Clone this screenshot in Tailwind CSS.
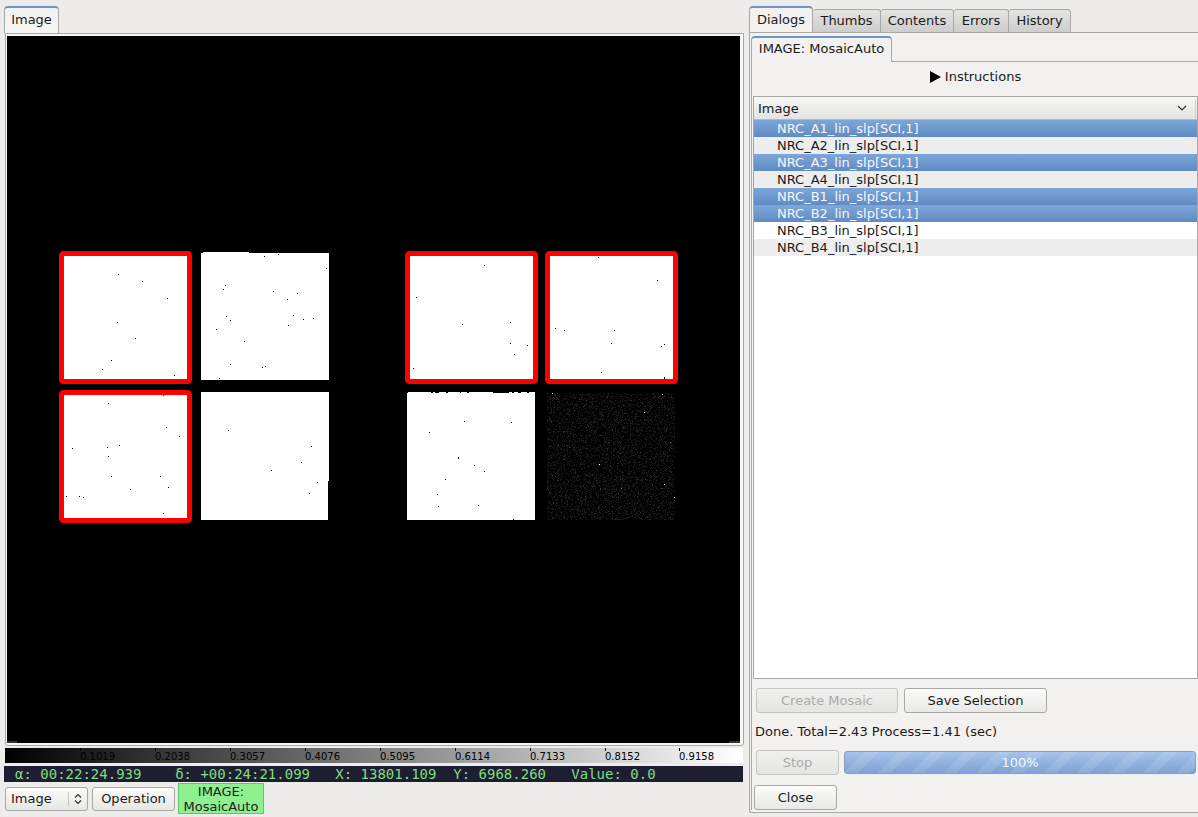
<!DOCTYPE html>
<html lang="en">
<head>
    <meta charset="UTF-8">
    <title>Ginga - Mosaic</title>
    <script src="https://cdn.jsdelivr.net/npm/@tailwindcss/browser@4"></script>
</head>
<body class="w-[1198px] h-[817px] overflow-hidden bg-[#edecea] text-[13px] leading-[16px] text-[#1a1a1a] font-['DejaVu_Sans',sans-serif]">
    <div class="flex h-full">
        <!-- image viewer side -->
        <div class="w-[745px] h-full pt-[6px] pl-[4px] flex flex-col">
            <div class="flex h-[27px]">
                <div class="w-[55px] pb-[2px] flex items-center justify-center rounded-t-[4px] border border-b-0 border-[#a8a8a6] border-t-2 border-t-[#6f94c3] bg-gradient-to-b from-[#f2f2f0] to-[#f6f6f5]">Image</div>
            </div>
            <div class="w-[739px] h-[713px] ml-[1px] border border-[#a8a8a6] rounded-b-[3px] bg-[#f6f6f5] pl-[1px] pt-[2px]">
                <svg id="canvas" class="block" width="733" height="707" viewBox="7 36 733 707" shape-rendering="crispEdges">
                    <rect x="7" y="36" width="733" height="707" fill="#000"/>
                    <rect x="7" y="741" width="10" height="2" fill="#333"/>
                    <rect x="729" y="741" width="11" height="2" fill="#333"/>
                    <!-- top row -->
                    <rect x="64" y="256" width="123" height="123" fill="#fff"/>
                    <rect x="201" y="253" width="128" height="127" fill="#fff"/>
                    <rect x="203" y="252" width="46" height="1" fill="#fff"/>
                    <rect x="410" y="256" width="123" height="123" fill="#fff"/>
                    <rect x="550" y="256" width="123" height="123" fill="#fff"/>
                    <!-- bottom row -->
                    <rect x="64" y="395" width="123" height="123" fill="#fff"/>
                    <path d="M201 392h128v89h-1v39h-127z" fill="#fff"/>
                    <rect x="407" y="393" width="128" height="127" fill="#fff"/>
                    <path d="M408 392h23v1h-23zM433 392h2v1h-2zM439 392h7v1h-7zM448 392h12v1h-12zM461 392h6v1h-6zM469 392h24v1h-24zM509 392h3v1h-3zM514 392h4v1h-4zM521 392h6v1h-6zM529 392h6v1h-6z" fill="#fff"/>
                    <path id="noise" d="" fill="none"/>
                    <!-- selection outlines -->
                    <g fill="none" stroke="#ff0000" stroke-width="5" shape-rendering="auto">
                        <rect x="61.5" y="253.5" width="128" height="128" rx="2"/>
                        <rect x="407.5" y="253.5" width="128" height="128" rx="2"/>
                        <rect x="547.5" y="253.5" width="128" height="128" rx="2"/>
                        <rect x="61.5" y="392.5" width="128" height="128" rx="2"/>
                    </g>
                    <!-- hot pixels -->
                    <path fill="none" stroke="#000" stroke-width="1" d="M118 274.5h1M142 281.5h1M167 298.5h1M117 322.5h1M135 338.5h1M111 360.5h1M102 369.5h1M174 375.5h1
                        M264 256.5h1M278 254.5h1M326 268.5h1M225 285.5h1M223 289.5h1M273 291.5h1M297 293.5h1M287 299.5h1M226 316.5h1M230 320.5h1M293 315.5h1M303 319.5h1M313 318.5h1M288 325.5h1M216 329.5h1M244 341.5h1M230 364.5h1M265 366.5h1M262 367.5h1M219 378.5h1
                        M163 395.5h1M108 403.5h1M166 427.5h1M179 436.5h1M72 448.5h1M107 447.5h1M119 445.5h1M108 456.5h1M111 476.5h1M160 476.5h1M168 487.5h1M130 489.5h1M66 496.5h1M79 496.5h1M83 497.5h1M163 513.5h1
                        M228 430.5h1M311 446.5h1M301 462.5h1M271 470.5h1M317 482.5h1M309 493.5h1
                        M484 265.5h1M416 297.5h1M462 324.5h1M510 322.5h1M510 343.5h1M527 345.5h1M514 354.5h1M413 368.5h1
                        M598 257.5h1M657 280.5h1M555 328.5h1M564 330.5h1M614 330.5h1M611 343.5h1M664 344.5h1M661 346.5h1M601 372.5h1M664 377.5h1M664 378.5h1
                        M464 421.5h1M511 422.5h1M429 432.5h1M458 457.5h1M458 458.5h1M474 465.5h1M484 471.5h1M445 479.5h1M437 494.5h1M438 506.5h1M478 505.5h1M513 519.5h1"/>
                    <path fill="none" stroke="#fff" stroke-width="1" d="M552 393.5h1M662 394.5h1M644 412.5h1M599 464.5h1M664 484.5h1M674 497.5h1"/>
                    <path fill="none" stroke="#777" stroke-width="1" d="M670 442.5h1M621 488.5h1"/>
                </svg>
            </div>
            <div class="w-[738px] h-[15px] mt-[2px] ml-[1px] flex pl-[75px] bg-[linear-gradient(to_right,#000,#fff)] text-[10px] leading-[12px] text-black">
                <div class="w-[75px] pt-[3px] relative"><span class="absolute left-0 top-0 w-px h-[3px] bg-black"></span>0.1019</div>
                <div class="w-[75px] pt-[3px] relative"><span class="absolute left-0 top-0 w-px h-[3px] bg-black"></span>0.2038</div>
                <div class="w-[75px] pt-[3px] relative"><span class="absolute left-0 top-0 w-px h-[3px] bg-black"></span>0.3057</div>
                <div class="w-[75px] pt-[3px] relative"><span class="absolute left-0 top-0 w-px h-[3px] bg-black"></span>0.4076</div>
                <div class="w-[75px] pt-[3px] relative"><span class="absolute left-0 top-0 w-px h-[3px] bg-black"></span>0.5095</div>
                <div class="w-[75px] pt-[3px] relative"><span class="absolute left-0 top-0 w-px h-[3px] bg-black"></span>0.6114</div>
                <div class="w-[75px] pt-[3px] relative"><span class="absolute left-0 top-0 w-px h-[3px] bg-black"></span>0.7133</div>
                <div class="w-[74px] pt-[3px] relative"><span class="absolute left-0 top-0 w-px h-[3px] bg-black"></span>0.8152</div>
                <div class="w-[60px] pt-[3px] relative"><span class="absolute left-0 top-0 w-px h-[3px] bg-black"></span>0.9158</div>
            </div>
            <div class="w-[739px] h-[16px] mt-[3px] pl-[11px] bg-[#1e1e32] text-[#7fdf7f] text-[14px] leading-[16px] whitespace-pre font-['DejaVu_Sans_Mono',monospace]">α: 00:22:24.939    δ: +00:24:21.099   X: 13801.109  Y: 6968.260   Value: 0.0</div>
            <div class="flex items-start mt-[1px] ml-[1px]">
                <div class="w-[83px] h-[24px] mt-[4px] flex items-center pl-[5px] rounded-[3px] border border-[#a8a8a6] bg-gradient-to-b from-[#fbfbfa] to-[#e6e6e4]">
                    <span class="flex-1">Image</span>
                    <span class="w-px h-[14px] bg-[#c4c4c2]"></span>
                    <svg class="mx-[5px]" width="8" height="12" viewBox="0 0 8 12" fill="none" stroke="#333" stroke-width="1.2"><path d="M1 4.5 4 1.5 7 4.5M1 7.5 4 10.5 7 7.5"/></svg>
                </div>
                <div class="w-[83px] h-[24px] mt-[4px] ml-[4px] flex items-center justify-center rounded-[3px] border border-[#a8a8a6] bg-gradient-to-b from-[#fbfbfa] to-[#e6e6e4]">Operation</div>
                <div class="w-[86px] h-[31px] ml-[3px] border border-[#62c462] bg-[#8ef08e] text-center text-[13px] leading-[15px]">IMAGE:<br>MosaicAuto</div>
            </div>
        </div>

        <!-- dialogs side -->
        <div class="w-[453px] h-full pt-[6px] pl-[4px] flex flex-col">
            <div class="flex h-[27px]">
                <div class="w-[64px] pb-[2px] flex items-center justify-center rounded-t-[4px] border border-b-0 border-[#a8a8a6] border-t-2 border-t-[#6f94c3] bg-[#f2f1ef]">Dialogs</div>
                <div class="w-[68px] mt-[3px] flex items-center justify-center rounded-t-[3px] border border-l-0 border-[#a8a8a6] bg-gradient-to-b from-[#e4e4e2] to-[#cdcdcb]">Thumbs</div>
                <div class="w-[73px] mt-[3px] flex items-center justify-center rounded-t-[3px] border border-l-0 border-[#a8a8a6] bg-gradient-to-b from-[#e4e4e2] to-[#cdcdcb]">Contents</div>
                <div class="w-[55px] mt-[3px] flex items-center justify-center rounded-t-[3px] border border-l-0 border-[#a8a8a6] bg-gradient-to-b from-[#e4e4e2] to-[#cdcdcb]">Errors</div>
                <div class="w-[62px] mt-[3px] flex items-center justify-center rounded-t-[3px] border border-l-0 border-[#a8a8a6] bg-gradient-to-b from-[#e4e4e2] to-[#cdcdcb]">History</div>
            </div>
            <div class="h-[781px] border-l border-t border-b border-[#a8a8a6] rounded-bl-[3px] bg-[#f2f1ef] -mt-px pt-[3px] pl-[1px]">
                <div class="flex h-[26px]">
                    <div class="w-[141px] pb-[2px] flex items-center justify-center rounded-t-[4px] border border-b-0 border-[#a8a8a6] border-t-2 border-t-[#6f94c3] bg-[#f2f1ef]">IMAGE: MosaicAuto</div>
                </div>
                <div class="h-[749px] border-l border-t border-[#a8a8a6] pl-[1px] -mt-px">
                    <div class="h-[30px] mb-[4px] flex items-center justify-center gap-[4px]">
                        <svg width="11" height="12" viewBox="0 0 11 12"><path d="M0 0 11 6 0 12z" fill="#000"/></svg>
                        <span>Instructions</span>
                    </div>
                    <div class="w-[445px] h-[583px] border border-[#a8a8a6] bg-white flex flex-col">
                        <div class="h-[23px] shrink-0 flex items-center justify-between pt-[1px] pl-[4px] border-b border-[#b8b8b6] bg-gradient-to-b from-[#f6f6f5] to-[#e4e4e2]">
                            <span>Image</span>
                            <span class="flex items-center">
                                <svg class="mr-[8px]" width="10" height="7" viewBox="0 0 10 7" fill="none" stroke="#333" stroke-width="1.2"><path d="M1 1 5 5 9 1"/></svg>
                                <span class="w-px h-[18px] bg-[#d0d0ce]"></span>
                                <span class="w-px"></span>
                            </span>
                        </div>
                        <div class="h-[17px] leading-[18px] pl-[23px] bg-gradient-to-b from-[#7ea6d8] to-[#5f8bc3] text-[#f4f7fb]">NRC_A1_lin_slp[SCI,1]</div>
                        <div class="h-[17px] leading-[18px] pl-[23px] bg-[#eeeded]">NRC_A2_lin_slp[SCI,1]</div>
                        <div class="h-[17px] leading-[18px] pl-[23px] bg-gradient-to-b from-[#7ea6d8] to-[#5f8bc3] text-[#f4f7fb]">NRC_A3_lin_slp[SCI,1]</div>
                        <div class="h-[17px] leading-[18px] pl-[23px] bg-[#eeeded]">NRC_A4_lin_slp[SCI,1]</div>
                        <div class="h-[17px] leading-[18px] pl-[23px] bg-gradient-to-b from-[#7ea6d8] to-[#5f8bc3] text-[#f4f7fb]">NRC_B1_lin_slp[SCI,1]</div>
                        <div class="h-[17px] leading-[18px] pl-[23px] bg-gradient-to-b from-[#7ea6d8] to-[#5f8bc3] text-[#f4f7fb]">NRC_B2_lin_slp[SCI,1]</div>
                        <div class="h-[17px] leading-[18px] pl-[23px] bg-white">NRC_B3_lin_slp[SCI,1]</div>
                        <div class="h-[17px] leading-[18px] pl-[23px] bg-[#eeeded]">NRC_B4_lin_slp[SCI,1]</div>
                    </div>
                    <div class="flex gap-[6px] mt-[9px] ml-[3px]">
                        <div class="w-[142px] h-[25px] flex items-center justify-center rounded-[3px] border border-[#c4c4c2] bg-gradient-to-b from-[#f0f0ee] to-[#e4e4e2] text-[#aaa]">Create Mosaic</div>
                        <div class="w-[143px] h-[25px] flex items-center justify-center rounded-[3px] border border-[#a8a8a6] bg-gradient-to-b from-[#fbfbfa] to-[#e8e8e6]">Save Selection</div>
                    </div>
                    <div class="mt-[11px] ml-[2px] h-[16px]">Done. Total=2.43 Process=1.41 (sec)</div>
                    <div class="flex gap-[5px] mt-[10px] ml-[3px] items-center">
                        <div class="w-[83px] h-[25px] flex items-center justify-center rounded-[3px] border border-[#c4c4c2] bg-gradient-to-b from-[#f0f0ee] to-[#e4e4e2] text-[#aaa]">Stop</div>
                        <div class="w-[352px] h-[23px] flex items-center justify-center rounded-[3px] border border-[#8a9db8] text-[#f4f7fb] bg-[repeating-linear-gradient(135deg,#ffffff00_0,#ffffff00_14px,#ffffff1c_14px,#ffffff1c_23.5px),linear-gradient(to_bottom,#a6c3ea,#7ca2d3)]">100%</div>
                    </div>
                    <div class="w-[83px] h-[25px] mt-[10px] ml-[1px] flex items-center justify-center rounded-[3px] border border-[#a8a8a6] bg-gradient-to-b from-[#fbfbfa] to-[#e8e8e6]">Close</div>
                </div>
            </div>
        </div>
    </div>

    <script>
        // faint read noise for the NRC_B4 tile
        var levels = ["#0d0d0d", "#171717", "#222222", "#363636"];
        var seed = 4711;
        function rnd() { seed = (seed * 16807) % 2147483647; return seed / 2147483647; }
        var svg = document.getElementById("canvas");
        levels.forEach(function (col, i) {
            var d = "";
            var chance = [0.3, 0.14, 0.05, 0.01][i];
            for (var y = 393; y < 520; y++) {
                for (var x = 547; x < 675; x++) {
                    if (rnd() < chance) d += "M" + x + " " + (y + 0.5) + "h1";
                }
            }
            var p = document.createElementNS("http://www.w3.org/2000/svg", "path");
            p.setAttribute("d", d);
            p.setAttribute("stroke", col);
            p.setAttribute("fill", "none");
            svg.insertBefore(p, document.getElementById("noise"));
        });
    </script>
</body>
</html>
